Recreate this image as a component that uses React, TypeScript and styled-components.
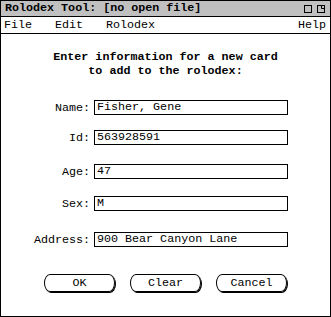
import React from "react";
import styled, { createGlobalStyle } from "styled-components";

const GlobalStyle = createGlobalStyle`
  html, body {
    margin: 0;
    padding: 0;
    background: #fff;
  }
  body {
    font-family: "Liberation Mono", "DejaVu Sans Mono", monospace;
    font-size: 11.7px;
    color: #000;
  }
`;

const Window = styled.div`
  width: 331px;
  height: 317px;
  box-sizing: border-box;
  border: 1px solid #000;
  display: flex;
  flex-direction: column;
  background: #fff;
`;

const TitleBar = styled.div`
  height: 15px;
  background: #c0c0c0;
  border-bottom: 1px solid #000;
  display: flex;
  align-items: center;
  justify-content: space-between;
  padding: 0 5px 0 4px;
`;

const Title = styled.span`
  font-weight: bold;
  line-height: 15px;
`;

const WindowIcons = styled.div`
  display: flex;
  gap: 5px;
  padding-top: 1px;
`;

const MenuBar = styled.div`
  height: 16px;
  border-bottom: 1px solid #000;
  display: flex;
  align-items: center;
  padding: 0 4px 0 3px;
`;

const MenuItem = styled.span<{ $width?: number }>`
  width: ${(p) => (p.$width ? `${p.$width}px` : "auto")};
  line-height: 16px;
`;

const MenuSpacer = styled.div`
  flex: 1;
`;

const Content = styled.div`
  display: flex;
  flex-direction: column;
  align-items: center;
  padding-top: 16px;
`;

const Heading = styled.div`
  font-weight: bold;
  text-align: center;
  line-height: 14px;
`;

const Form = styled.div`
  align-self: flex-start;
  display: flex;
  flex-direction: column;
  margin-top: 22px;
`;

const Row = styled.div<{ $top: number }>`
  display: grid;
  grid-template-columns: 89px 194px;
  column-gap: 4px;
  align-items: center;
  margin-top: ${(p) => p.$top}px;
`;

const Label = styled.label`
  text-align: right;
`;

const Field = styled.div`
  height: 15px;
  box-sizing: border-box;
  border: 1px solid #000;
  padding-left: 2px;
  line-height: 13px;
  white-space: nowrap;
`;

const ButtonRow = styled.div`
  display: flex;
  gap: 15px;
  margin-top: 27px;
`;

const Button = styled.div`
  width: 71px;
  height: 18px;
  box-sizing: border-box;
  border: 1px solid #000;
  border-radius: 6px / 9px;
  box-shadow: 1px 1px 0 #000;
  display: flex;
  align-items: center;
  justify-content: center;
  line-height: 16px;
`;

const MinimizeIcon = () => (
  <svg width="8" height="8" viewBox="0 0 8 8">
    <rect x="0.5" y="0.5" width="7" height="7" fill="none" stroke="#000" />
  </svg>
);

const MaximizeIcon = () => (
  <svg width="8" height="8" viewBox="0 0 8 8">
    <rect x="0.5" y="0.5" width="7" height="7" fill="none" stroke="#000" />
    <path d="M4.5 0.5 V3.5 H7.5" fill="none" stroke="#000" />
  </svg>
);

const fields = [
  { label: "Name:", value: "Fisher, Gene", top: 0 },
  { label: "Id:", value: "563928591", top: 15 },
  { label: "Age:", value: "47", top: 19 },
  { label: "Sex:", value: "M", top: 17 },
  { label: "Address:", value: "900 Bear Canyon Lane", top: 21 },
];

const App = () => {
  return (
    <>
      <GlobalStyle />
      <Window>
        <TitleBar>
          <Title>Rolodex Tool: [no open file]</Title>
          <WindowIcons>
            <MinimizeIcon />
            <MaximizeIcon />
          </WindowIcons>
        </TitleBar>
        <MenuBar>
          <MenuItem $width={51}>File</MenuItem>
          <MenuItem $width={51}>Edit</MenuItem>
          <MenuItem>Rolodex</MenuItem>
          <MenuSpacer />
          <MenuItem>Help</MenuItem>
        </MenuBar>
        <Content>
          <Heading>
            Enter information for a new card
            <br />
            to add to the rolodex:
          </Heading>
          <Form>
            {fields.map((f) => (
              <Row key={f.label} $top={f.top}>
                <Label>{f.label}</Label>
                <Field>{f.value}</Field>
              </Row>
            ))}
          </Form>
          <ButtonRow>
            <Button>OK</Button>
            <Button>Clear</Button>
            <Button>Cancel</Button>
          </ButtonRow>
        </Content>
      </Window>
    </>
  );
};

export default App;
